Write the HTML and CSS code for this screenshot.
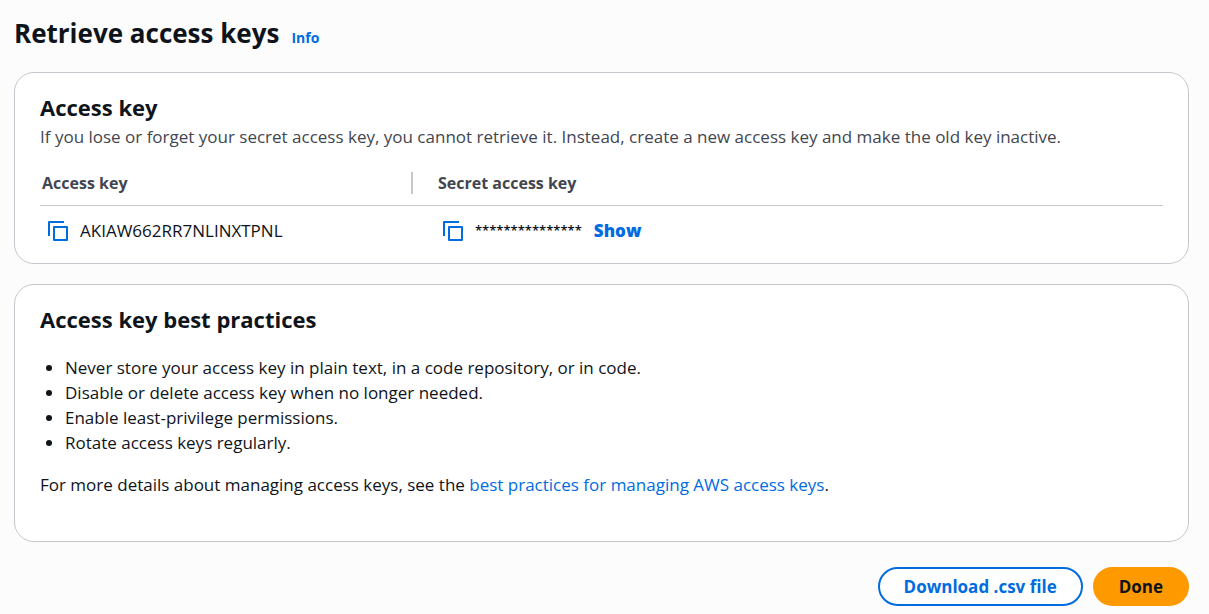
FILE: index.html
```html
<!DOCTYPE html>
<html lang="en">
<head>
<meta charset="utf-8">
<title>Retrieve access keys</title>
<link rel="stylesheet" href="styles.css">
</head>
<body>
<main class="page">
  <header class="page-header">
    <h1>Retrieve access keys</h1>
    <a class="info" href="#">Info</a>
  </header>
  <section class="card">
    <h2>Access key</h2>
    <p class="description">If you lose or forget your secret access key, you cannot retrieve it. Instead, create a new access key and make the old key inactive.</p>
    <table class="keys">
      <thead>
        <tr><th class="key-col" scope="col"><span class="label">Access key</span></th><th scope="col"><span class="label">Secret access key</span></th></tr>
      </thead>
      <tbody>
        <tr>
          <td><div class="value"><button class="copy" type="button" aria-label="Copy access key"><svg viewBox="0 0 20 20"><path d="M6 6h13v13H6z"/><path d="M1 15V1h15"/></svg></button><span>AKIAW662RR7NLINXTPNL</span></div></td>
          <td><div class="value"><button class="copy" type="button" aria-label="Copy secret access key"><svg viewBox="0 0 20 20"><path d="M6 6h13v13H6z"/><path d="M1 15V1h15"/></svg></button><span class="masked">***************</span><button class="show" type="button">Show</button></div></td>
        </tr>
      </tbody>
    </table>
  </section>
  <section class="card practices">
    <h2>Access key best practices</h2>
    <ul>
      <li>Never store your access key in plain text, in a code repository, or in code.</li>
      <li>Disable or delete access key when no longer needed.</li>
      <li>Enable least-privilege permissions.</li>
      <li>Rotate access keys regularly.</li>
    </ul>
    <p>For more details about managing access keys, see the <a href="#">best practices for managing AWS access keys</a>.</p>
  </section>
  <footer class="actions">
    <button class="button" type="button">Download .csv file</button>
    <button class="button primary" type="button">Done</button>
  </footer>
</main>
</body>
</html>
```
FILE: styles.css
```css
* { box-sizing: border-box; }
body {
  margin: 0;
  background: #fcfcfd;
  color: #0f141a;
  font: 17px/25px "Open Sans", "Noto Sans", sans-serif;
}
h1, h2, p, ul { margin: 0; }
a { color: #006ce0; text-decoration: none; }
button { font: inherit; cursor: pointer; }
.page { padding: 13px 20px 8px 14px; }
.page-header { display: flex; align-items: baseline; gap: 12px; margin-bottom: 19px; }
h1 { font-size: 26px; line-height: 40px; font-weight: 700; }
.info { font-size: 14px; font-weight: 700; }
.card {
  background: #fff;
  border: 1px solid #c6c6cd;
  border-radius: 20px;
  padding: 18px 25px 0;
  margin-bottom: 20px;
}
h2 { font-size: 22px; line-height: 32px; font-weight: 700; }
.description { padding-top: 1px; color: #424650; }
.keys { width: 100%; border-collapse: collapse; margin-top: 23px; }
th { padding: 0 0 11px; text-align: left; border-bottom: 1px solid #c6c6cd; color: #424650; font-size: 16px; font-weight: 700; }
.label { display: block; padding-left: 2px; line-height: 22px; }
th + th .label { padding-left: 25px; border-left: 2px solid #c6c6cd; }
.key-col { width: 371px; }
td { padding: 12px 0 20px 8px; }
td + td { padding-left: 32px; }
.value { display: flex; align-items: center; gap: 12px; }
.copy { display: flex; padding: 0; border: 0; background: none; color: #006ce0; }
.copy svg { width: 20px; height: 20px; fill: none; stroke: currentColor; stroke-width: 2; stroke-linejoin: round; }
.masked { font-size: 13px; font-weight: 600; }
.show { padding: 0; border: 0; background: none; color: #006ce0; font-weight: 800; }
.practices { padding-bottom: 44px; }
ul { padding-left: 25px; margin: 20px 0 17px; }
.actions { display: flex; justify-content: flex-end; gap: 10px; margin-top: 25px; }
.button {
  height: 39px;
  padding: 0 24px;
  border: 2px solid #006ce0;
  border-radius: 20px;
  background: #fff;
  color: #006ce0;
  font-weight: 700;
}
.primary { background: #ff9900; border-color: #ff9900; color: #0f141a; }
```
